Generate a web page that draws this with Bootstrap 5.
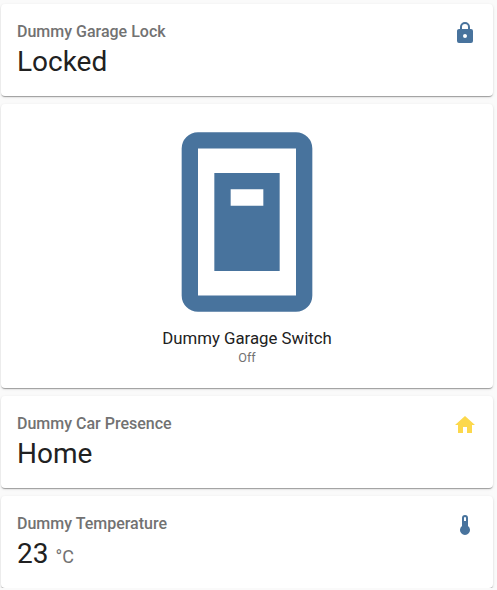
<!DOCTYPE html>
<html lang="en">
<head>
<meta charset="utf-8">
<meta name="viewport" content="width=device-width, initial-scale=1">
<title>Garage</title>
<link href="https://cdn.jsdelivr.net/npm/bootstrap@5.3.0/dist/css/bootstrap.min.css" rel="stylesheet">
<style>
body{background:#fafafa;font-family:Roboto,"Noto Sans",sans-serif;color:#212121;overflow:hidden}
.stack{width:492px;margin:4px 0 0 1px}
.tile{border:0;border-radius:4px;background:#fff;color:#212121;box-shadow:0 2px 1px -1px rgba(0,0,0,.2),0 1px 1px 0 rgba(0,0,0,.14),0 1px 3px 0 rgba(0,0,0,.12)}
.entity{height:92px;padding:8px 16px 0}
.entity-name{font-size:16px;font-weight:500;line-height:40px;color:#727272}
.entity-icon{width:24px;height:24px;margin-top:9px;fill:#48739d}
.entity-icon.home{fill:#fcd84c}
.entity-value{font-size:28px;line-height:28px;margin-top:-4px}
.unit{font-size:18px;color:#727272}
.switch-tile{height:284px;padding-top:20px}
.switch-icon{width:196px;height:196px;fill:#48739d}
.switch-name{font-size:16.8px;line-height:20px;margin-top:8px}
.switch-state{font-size:12.6px;line-height:18px;margin-top:1px;color:#727272}
</style>
</head>
<body>
<main class="stack d-flex flex-column gap-2">
  <section class="card tile entity">
    <div class="d-flex justify-content-between">
      <div class="entity-name">Dummy Garage Lock</div>
      <svg class="entity-icon" viewBox="0 0 24 24" aria-hidden="true"><path d="M12,17A2,2 0 0,0 14,15C14,13.89 13.1,13 12,13A2,2 0 0,0 10,15A2,2 0 0,0 12,17M18,8A2,2 0 0,1 20,10V20A2,2 0 0,1 18,22H6A2,2 0 0,1 4,20V10C4,8.89 4.9,8 6,8H7V6A5,5 0 0,1 12,1A5,5 0 0,1 17,6V8H18M12,3A3,3 0 0,0 9,6V8H15V6A3,3 0 0,0 12,3Z"/></svg>
    </div>
    <div class="entity-value">Locked</div>
  </section>
  <section class="card tile switch-tile align-items-center text-center">
    <svg class="switch-icon" viewBox="0 0 24 24" aria-hidden="true"><path fill-rule="evenodd" d="M6,1H18A2,2 0 0,1 20,3V21A2,2 0 0,1 18,23H6A2,2 0 0,1 4,21V3A2,2 0 0,1 6,1M6,3V21H18V3H6M8,6H16V18H8V6M10,8V10H14V8H10Z"/></svg>
    <div class="switch-name">Dummy Garage Switch</div>
    <div class="switch-state">Off</div>
  </section>
  <section class="card tile entity">
    <div class="d-flex justify-content-between">
      <div class="entity-name">Dummy Car Presence</div>
      <svg class="entity-icon home" viewBox="0 0 24 24" aria-hidden="true"><path d="M10,20V14H14V20H19V12H22L12,3L2,12H5V20H10Z"/></svg>
    </div>
    <div class="entity-value">Home</div>
  </section>
  <section class="card tile entity">
    <div class="d-flex justify-content-between">
      <div class="entity-name">Dummy Temperature</div>
      <svg class="entity-icon" viewBox="0 0 24 24" aria-hidden="true"><path d="M15 13V5A3 3 0 0 0 9 5V13A5 5 0 1 0 15 13M12 4A1 1 0 0 1 13 5V8H11V5A1 1 0 0 1 12 4Z"/></svg>
    </div>
    <div class="entity-value">23 <span class="unit">°C</span></div>
  </section>
</main>
<script src="https://cdn.jsdelivr.net/npm/bootstrap@5.3.0/dist/js/bootstrap.bundle.min.js"></script>
</body>
</html>
